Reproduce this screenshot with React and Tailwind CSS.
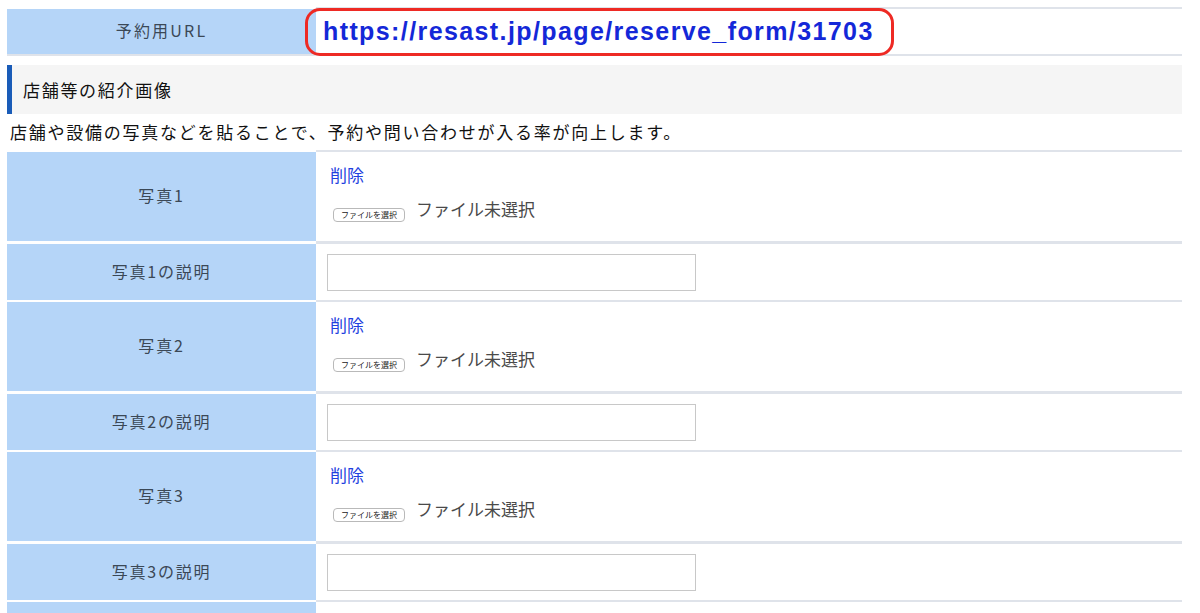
import React from "react";

const JP = { fontFamily: '"Noto Sans CJK JP", "Noto Sans", sans-serif' };

function FileCell() {
  return (
    <div className="flex flex-col pl-[14px] pt-[12px]">
      <span className="text-[17px] leading-[22px] text-[#1f3fe0]">削除</span>
      <div className="flex items-start mt-[12px] h-[26px]">
        <span className="ml-[3px] mt-[10px] flex h-[14px] w-[72px] items-center justify-center rounded-[4px] border border-[#b9b9b9] bg-white text-[8px] leading-none text-[#222]">
          ファイルを選択
        </span>
        <span className="ml-[11px] text-[17px] leading-[22px] text-[#4a4a4a]">ファイル未選択</span>
      </div>
    </div>
  );
}

function InputCell() {
  return (
    <div className="flex h-full items-center pl-[11px]">
      <div className="h-[37px] w-[369px] border border-[#c8c8c8] bg-white"></div>
    </div>
  );
}

function Row({ label, children, h, topB }) {
  return (
    <div className="flex">
      <div
        className={`w-[309px] shrink-0 ${topB} border-white bg-[#b5d5f8] flex items-center justify-center text-[16px] tracking-[1.8px] text-[#3b4856]`}
      >
        <div className={`${h} flex items-center justify-center pb-[3px]`}>{label}</div>
      </div>
      <div className={`flex-1 ${topB} border-[#dfe3ea] bg-white`}>{children}</div>
    </div>
  );
}

export default function App() {
  const photos = [1, 2, 3];
  return (
    <div className="h-[613px] bg-white pl-[7px] pr-[18px] pt-[7px] overflow-hidden" style={JP}>
      {/* top table */}
      <div className="flex border-b-2 border-[#dfe3ea]">
        <div className="w-[309px] shrink-0 border-t-2 border-white bg-[#b5d5f8] h-[47px] flex items-center justify-center pb-[4px] text-[16px] tracking-[2.2px] text-[#3b4856]">
          予約用URL
        </div>
        <div className="flex-1 border-t-2 border-[#dfe3ea] bg-white h-[47px] relative">
          <div className="absolute left-[-11px] top-[-1px] flex h-[48px] w-[589px] items-center rounded-[15px] border-[3px] border-[#ee2a24] pl-[15px]">
            <span
              className="text-[25px] font-bold text-[#1428d8] tracking-[1.4px]"
              style={{ fontFamily: '"Liberation Sans", Arial, sans-serif' }}
            >
              https://resast.jp/page/reserve_form/31703
            </span>
          </div>
        </div>
      </div>

      {/* section header */}
      <div className="mt-[9px] flex h-[49px] items-center border-l-[5px] border-[#1a5cb8] bg-[#f5f5f5] pl-[11px]">
        <span className="text-[17px] tracking-[1.7px] text-[#111]">店舗等の紹介画像</span>
      </div>

      <div className="h-[36px] flex items-center pl-[3px]">
        <span className="text-[17px] tracking-[1.75px] text-[#111]">
          店舗や設備の写真などを貼ることで、予約や問い合わせが入る率が向上します。
        </span>
      </div>

      {/* photos table */}
      <div className="flex flex-col">
        {photos.map((n) => (
          <React.Fragment key={n}>
            <Row label={`写真${n}`} h="h-[89px]" topB="border-t-2">
              <FileCell />
            </Row>
            <Row label={`写真${n}の説明`} h="h-[56px]" topB="border-t-[3px]">
              <InputCell />
            </Row>
          </React.Fragment>
        ))}
        <Row label="" h="h-[89px]" topB="border-t-2">
          <div></div>
        </Row>
      </div>
    </div>
  );
}
